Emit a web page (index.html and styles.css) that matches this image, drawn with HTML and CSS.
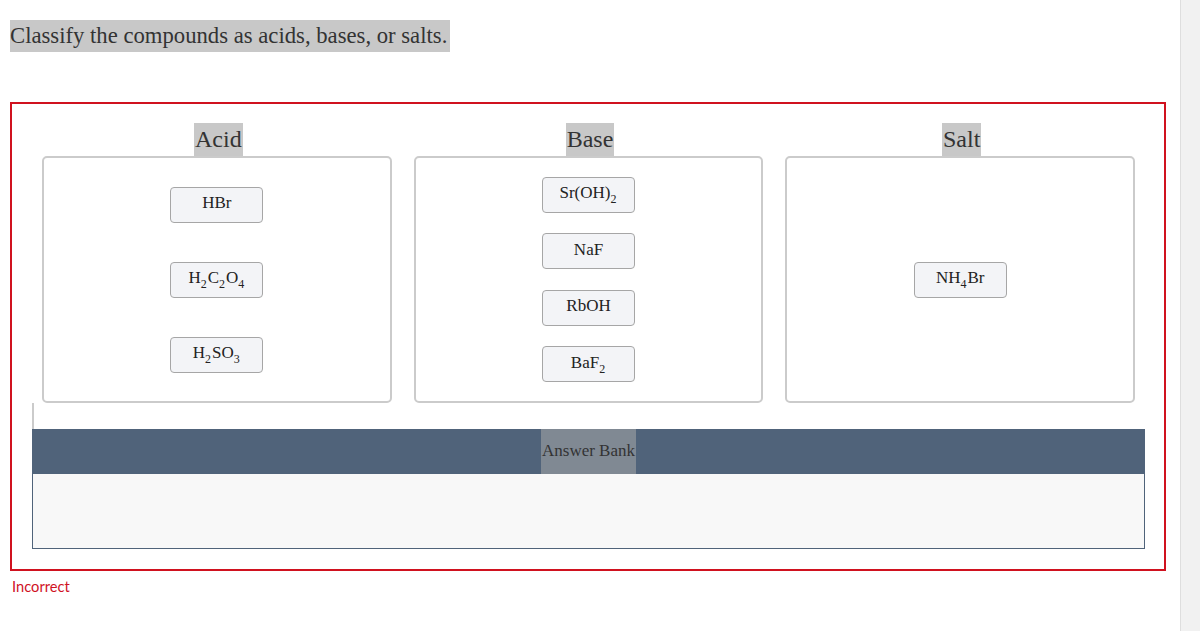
FILE: index.html
```html
<!DOCTYPE html>
<html>
<head>
<meta charset="utf-8">
<link rel="stylesheet" href="styles.css">
</head>
<body>
<div class="page">
  <main class="main">
    <div class="prompt"><span class="prompt-text">Classify the compounds as acids, bases, or salts.</span></div>
    <section class="question">
      <div class="columns">
        <div class="column">
          <div class="col-title"><span class="hl">Acid</span></div>
          <div class="bin bin-acid">
            <div class="chip"><span>HBr</span></div>
            <div class="chip"><span>H<sub>2</sub>C<sub>2</sub>O<sub>4</sub></span></div>
            <div class="chip"><span>H<sub>2</sub>SO<sub>3</sub></span></div>
          </div>
        </div>
        <div class="column">
          <div class="col-title"><span class="hl">Base</span></div>
          <div class="bin bin-base">
            <div class="chip"><span>Sr(OH)<sub>2</sub></span></div>
            <div class="chip"><span>NaF</span></div>
            <div class="chip"><span>RbOH</span></div>
            <div class="chip"><span>BaF<sub>2</sub></span></div>
          </div>
        </div>
        <div class="column">
          <div class="col-title"><span class="hl">Salt</span></div>
          <div class="bin bin-salt">
            <div class="chip"><span>NH<sub>4</sub>Br</span></div>
          </div>
        </div>
      </div>
      <div class="bank">
        <div class="bank-stub"></div>
        <div class="bank-head"><span class="bank-label">Answer Bank</span></div>
        <div class="bank-body"></div>
      </div>
    </section>
    <div class="status">Incorrect</div>
  </main>
  <aside class="scroll"></aside>
</div>
</body>
</html>
```
FILE: styles.css
```css
html, body {
  margin: 0;
  padding: 0;
  background: #fff;
}
.page {
  display: flex;
  width: 1200px;
  height: 631px;
  overflow: hidden;
}
.main {
  flex: 1;
  padding: 20px 14px 0 10px;
  font-family: "Liberation Serif", "Times New Roman", serif;
  color: #333;
}
.scroll {
  width: 19px;
  background: #f1f1f1;
  border-left: 1px solid #dedede;
}
.prompt {
  height: 32px;
}
.prompt-text {
  display: inline-block;
  background: #c8c8c8;
  font-size: 22.7px;
  line-height: 32px;
  padding-right: 3px;
  color: #333;
}
.question {
  margin-top: 50px;
  border: 2px solid #d0121f;
  padding: 19px 19px 20px 20px;
}
.columns {
  display: flex;
  gap: 22px;
  padding: 0 10px;
}
.column {
  flex: 1;
  display: flex;
  flex-direction: column;
  align-items: center;
}
.col-title {
  height: 33px;
  text-align: center;
}
.hl {
  display: inline-block;
  background: #c8c8c8;
  font-size: 24px;
  line-height: 33px;
  padding: 0 1px;
  margin-left: 3px;
}
.bin {
  align-self: stretch;
  height: 243px;
  border: 2px solid #cbcbcb;
  border-radius: 5px;
  display: flex;
  flex-direction: column;
  align-items: center;
  justify-content: center;
}
.bin-acid { gap: 39px; }
.bin-base { gap: 20.5px; }
.chip {
  box-sizing: border-box;
  width: 93px;
  height: 36px;
  border: 1px solid #a6a6a6;
  border-radius: 4px;
  background: #f3f4f7;
  font-size: 17px;
  color: #222;
  display: flex;
  align-items: center;
  justify-content: center;
  line-height: 1;
  padding-bottom: 4px;
}
.chip sub {
  font-size: 12px;
  vertical-align: -5px;
  line-height: 0;
  margin: 0 1px 0 0;
}
.bank {
  display: flex;
  flex-direction: column;
}
.bank-stub {
  width: 0;
  height: 26px;
  border-left: 2px solid #cbcbcb;
}
.bank-head {
  height: 45px;
  background: #50637a;
  text-align: center;
}
.bank-label {
  display: inline-block;
  background: #808993;
  font-size: 17px;
  line-height: 43px;
  height: 45px;
  padding: 0 1px;
  color: #333;
}
.bank-body {
  height: 74px;
  background: #f8f8f8;
  border: 1px solid #50637a;
  border-top: none;
}
.status {
  margin-top: 6px;
  padding-left: 2px;
  font-family: Lato, "Open Sans", sans-serif;
  font-size: 14.7px;
  color: #d0121f;
  line-height: 18px;
}
```
